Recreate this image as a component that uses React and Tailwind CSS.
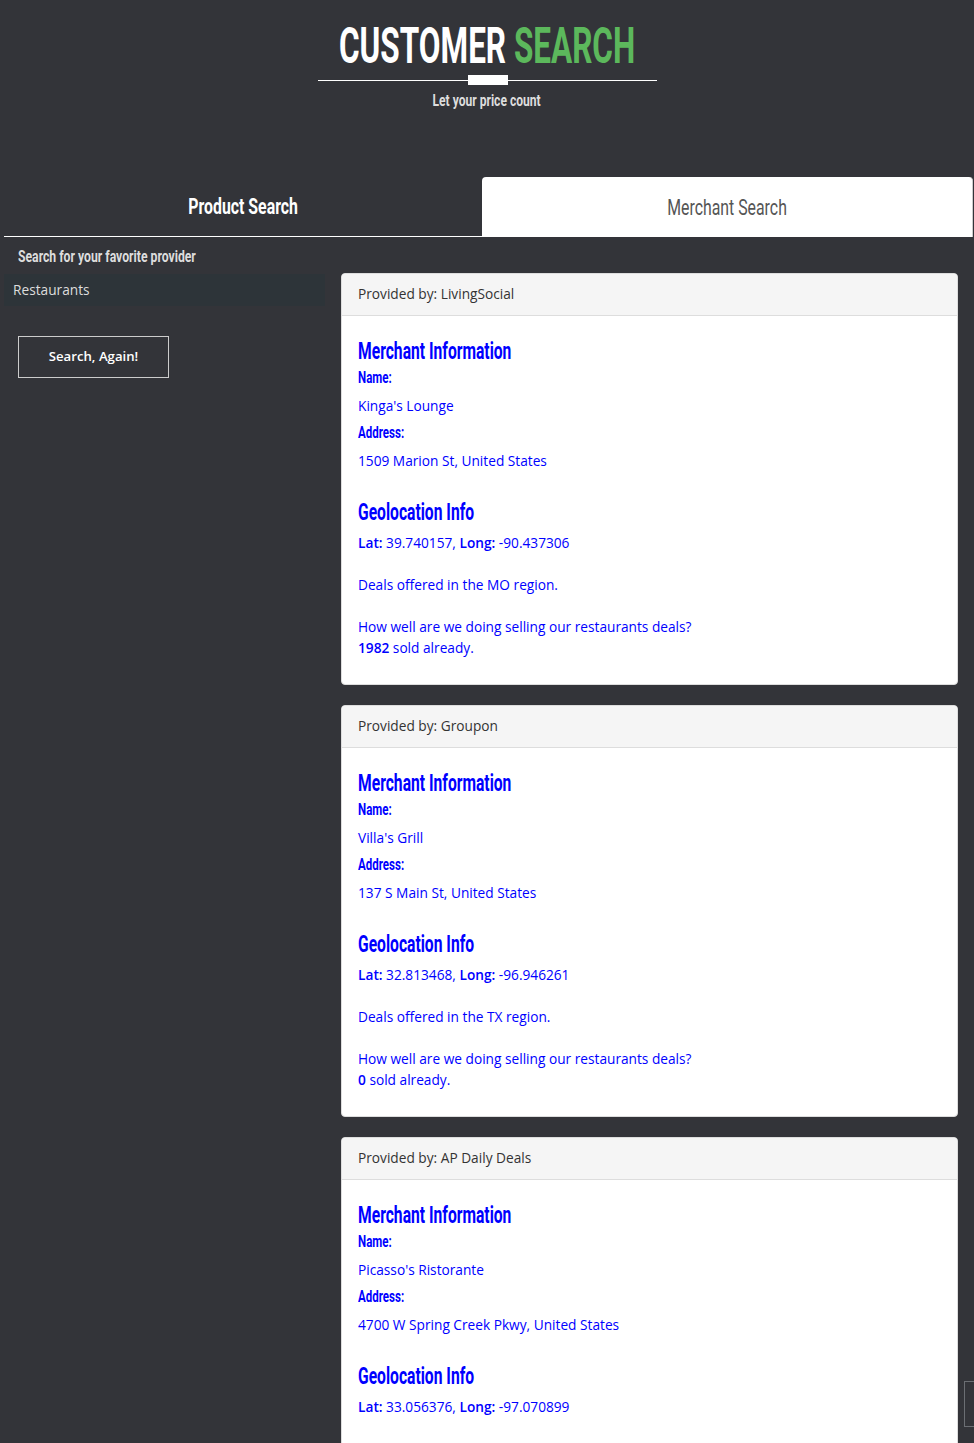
const cond = "font-['Roboto',sans-serif] inline-block";
const body = "font-['Open_Sans','Noto_Sans',sans-serif]";

const deals = [
  { provider: 'LivingSocial', name: "Kinga's Lounge", address: '1509 Marion St, United States', lat: '39.740157', long: '-90.437306', region: 'MO', sold: '1982' },
  { provider: 'Groupon', name: "Villa's Grill", address: '137 S Main St, United States', lat: '32.813468', long: '-96.946261', region: 'TX', sold: '0' },
  { provider: 'AP Daily Deals', name: "Picasso's Ristorante", address: '4700 W Spring Creek Pkwy, United States', lat: '33.056376', long: '-97.070899', region: 'TX', sold: '0' },
];

function DealCard({ deal }) {
  return (
    <div className="rounded-[4px] border border-[#dddddd] bg-white overflow-hidden">
      <div className={`h-[42px] bg-[#f5f5f5] border-b border-[#dddddd] px-4 flex items-center text-[13.7px] text-[#333333] ${body}`}>
        Provided by: {deal.provider}
      </div>
      <div className={`px-4 pt-[21px] pb-[26px] text-[#0000ff] text-[13.7px] ${body}`}>
        <div className="leading-[30px]">
          <h3 className={`${cond} font-bold text-[23px] scale-x-[0.68] origin-left`}>Merchant Information</h3>
        </div>
        <div className="leading-[20px] -mt-[1px]">
          <span className={`${cond} font-bold text-[16px] scale-x-[0.72] origin-left`}>Name:</span>
        </div>
        <div className="leading-[20px] mt-[8px]">{deal.name}</div>
        <div className="leading-[20px] mt-[7px]">
          <span className={`${cond} font-bold text-[16px] scale-x-[0.72] origin-left`}>Address:</span>
        </div>
        <div className="leading-[20px] mt-[8px]">{deal.address}</div>
        <div className="leading-[30px] mt-[27px]">
          <h3 className={`${cond} font-bold text-[23px] scale-x-[0.68] origin-left`}>Geolocation Info</h3>
        </div>
        <div className="leading-[20px] mt-[3px]">
          <span className="font-semibold">Lat:</span> {deal.lat}, <span className="font-semibold">Long:</span> {deal.long}
        </div>
        <div className="leading-[20px] mt-[22px]">Deals offered in the {deal.region} region.</div>
        <div className="leading-[21px] mt-[21px]">
          How well are we doing selling our restaurants deals?
          <br />
          <span className="font-semibold">{deal.sold}</span> sold already.
        </div>
      </div>
    </div>
  );
}

export default function App() {
  return (
    <div className="min-h-screen bg-[#333439] relative">
      {/* header */}
      <div className="flex flex-col items-center pt-[18px]">
        <h1 className={`${cond} font-bold text-[50px] leading-[56px] scale-x-[0.63]`}>
          <span className="text-white">CUSTOMER</span> <span className="text-[#5cb85c]">SEARCH</span>
        </h1>
        <div className="relative w-[339px] h-[10px] mt-[1px] flex items-center justify-center">
          <div className="w-full h-px bg-white"></div>
          <div className="absolute left-[150px] top-0 w-[40px] h-[10px] bg-white"></div>
        </div>
        <div className={`${cond} font-bold text-[16px] leading-[20px] text-[#dddddd] mt-[6px] scale-x-[0.755]`}>Let your price count</div>
      </div>

      {/* tabs */}
      <div className="flex pl-[4px] pr-px mt-[66px]">
        <div className="w-[478px] h-[60px] flex items-center justify-center border-b border-white text-white">
          <span className={`${cond} font-bold text-[22px] scale-x-[0.72]`}>Product Search</span>
        </div>
        <div className="flex-1 h-[60px] flex items-center justify-center bg-white rounded-t-[4px] border-r border-[#cccccc] text-[#555555]">
          <span className={`${cond} text-[22px] scale-x-[0.72]`}>Merchant Search</span>
        </div>
      </div>

      {/* content */}
      <div className="flex pl-[4px] pr-[16px] gap-[16px]">
        <div className="w-[321px] shrink-0">
          <div className="leading-[20px] pl-[14px] mt-[9px]">
            <span className={`${cond} font-bold text-[16px] text-[#dddddd] scale-x-[0.763] origin-left`}>Search for your favorite provider</span>
          </div>
          <div className={`h-[32px] mt-[7px] bg-[#2d3439] flex items-center px-[9px] text-[13.7px] text-[#dddddd] ${body}`}>Restaurants</div>
          <button className={`ml-[14px] mt-[30px] w-[151px] h-[42px] border border-[#cccccc] text-white text-[13.2px] font-semibold ${body}`}>
            Search, Again!
          </button>
        </div>
        <div className="flex-1 flex flex-col gap-[20px] pt-[36px] pb-[20px]">
          {deals.map((d) => (
            <DealCard key={d.provider} deal={d} />
          ))}
        </div>
      </div>

      <div className="absolute left-[964px] top-[1381px] w-[20px] h-[46px] border border-[#6b6e73]"></div>
    </div>
  );
}
